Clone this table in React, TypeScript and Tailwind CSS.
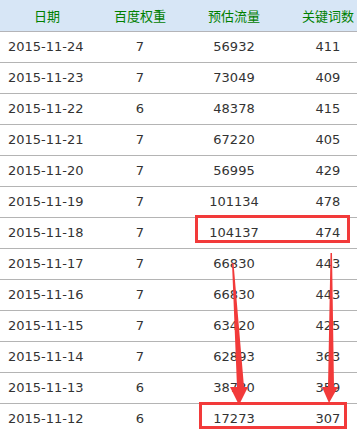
const rows: [string, number, number, number][] = [
  ["2015-11-24", 7, 56932, 411],
  ["2015-11-23", 7, 73049, 409],
  ["2015-11-22", 6, 48378, 415],
  ["2015-11-21", 7, 67220, 405],
  ["2015-11-20", 7, 56995, 429],
  ["2015-11-19", 7, 101134, 478],
  ["2015-11-18", 7, 104137, 474],
  ["2015-11-17", 7, 66830, 443],
  ["2015-11-16", 7, 66830, 443],
  ["2015-11-15", 7, 63420, 425],
  ["2015-11-14", 7, 62893, 363],
  ["2015-11-13", 6, 38730, 359],
  ["2015-11-12", 6, 17273, 307],
];

export default function App() {
  return (
    <div className="relative w-[357px] h-[434px] overflow-hidden bg-white font-['DejaVu_Sans','Noto_Sans_CJK_SC',sans-serif] text-[13px] text-[#333]">
      <table className="w-[374px] border-collapse table-fixed">
        <colgroup>
          <col className="w-[94px]" />
          <col className="w-[92px]" />
          <col className="w-[96px]" />
          <col className="w-[92px]" />
        </colgroup>
        <thead>
          <tr className="h-[31px] bg-[#d7e6f6] border-b border-[#b4b4b8] text-[#008000] font-['Noto_Sans_CJK_SC',sans-serif]">
            <th className="font-normal text-center p-0">日期</th>
            <th className="font-normal text-center p-0">百度权重</th>
            <th className="font-normal text-center p-0">预估流量</th>
            <th className="font-normal text-center p-0">关键词数</th>
          </tr>
        </thead>
        <tbody>
          {rows.map(([date, weight, flow, words]) => (
            <tr key={date} className="h-[31px] border-b border-[#b4b4b4]">
              <td className="pl-2 p-0">{date}</td>
              <td className="text-center p-0">{weight}</td>
              <td className="text-center p-0">{flow}</td>
              <td className="text-center p-0">{words}</td>
            </tr>
          ))}
        </tbody>
      </table>

      {/* annotation overlay */}
      <svg className="absolute inset-0 pointer-events-none" width="357" height="434">
        <rect x="196.5" y="216.5" width="152" height="25" fill="none" stroke="#f23a3a" strokeWidth="3" />
        <rect x="200.5" y="403.5" width="145" height="24" fill="none" stroke="#f23a3a" strokeWidth="3" />
        <polygon points="232,263 233.5,263 244,387 248,387 239,405 230,387 237,387" fill="#f23a3a" />
        <polygon points="330.5,253 332,253 334,387 338,387 329,403 322,387 328,387" fill="#f23a3a" />
      </svg>
    </div>
  );
}
